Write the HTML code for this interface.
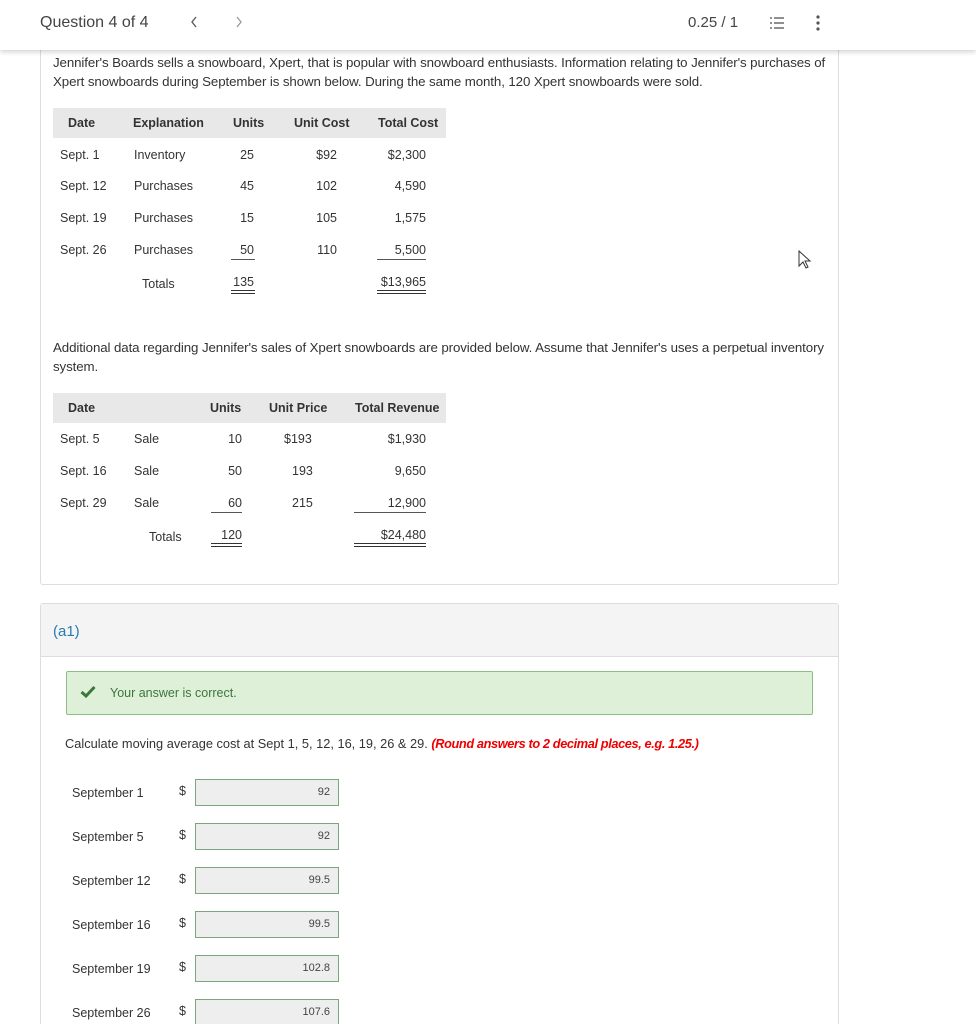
<!DOCTYPE html>
<html><head><meta charset="utf-8"><style>
*{margin:0;padding:0;box-sizing:border-box}
html,body{width:976px;height:1024px;overflow:hidden}
body{background:#fff;font-family:"Liberation Sans",sans-serif;color:#333;position:relative;font-size:12.5px}
.a{position:absolute;line-height:16px;white-space:nowrap}
.r{text-align:right}
.hdr{position:absolute;left:0;top:0;width:976px;height:50px;background:#fff;box-shadow:0 2px 5px rgba(0,0,0,.18);z-index:5}
.card{position:absolute;left:40px;width:799px;border:1px solid #ddd;border-radius:3px;background:#fff}
.th{position:absolute;left:53px;width:393px;height:30px;background:#e8e8e8}
.b{font-weight:bold}
.ul{position:absolute;height:1px;background:#555}
.dl{position:absolute;height:4px;border-top:1px solid #333;border-bottom:1px solid #333}
.inp{position:absolute;left:195px;width:144px;height:27px;background:#eee;border:1px solid #7aa67a;font-size:11px;text-align:right;padding-right:8px;line-height:25px;color:#444}
.p{font-size:13.3px;letter-spacing:-0.1px}
</style></head><body>
<div class="hdr">
<div class="a" style="left:40px;top:13px;font-size:16px;line-height:20px;color:#444">Question 4 of 4</div>
<svg class="a" style="left:190px;top:16px" width="8" height="12"><path d="M6 1 L2 6 L6 11" fill="none" stroke="#555" stroke-width="1.3"/></svg>
<svg class="a" style="left:235px;top:16px" width="8" height="12"><path d="M2 1 L6 6 L2 11" fill="none" stroke="#999" stroke-width="1.3"/></svg>
<div class="a" style="left:688px;top:13px;font-size:15px;line-height:20px;color:#444">0.25 / 1</div>
<svg class="a" style="left:769px;top:15px" width="16" height="16" viewBox="0 0 16 16"><g stroke="#555" stroke-width="1.3"><line x1="5" y1="3" x2="15" y2="3"/><line x1="5" y1="8" x2="15" y2="8"/><line x1="5" y1="13" x2="15" y2="13"/><line x1="2" y1="2" x2="2" y2="4"/><line x1="2" y1="7" x2="2" y2="9"/><line x1="2" y1="12" x2="2" y2="14"/></g></svg>
<svg class="a" style="left:815px;top:14px" width="6" height="18"><circle cx="3" cy="3" r="1.6" fill="#555"/><circle cx="3" cy="9" r="1.6" fill="#555"/><circle cx="3" cy="15" r="1.6" fill="#555"/></svg>
</div>
<div class="card" style="top:20px;height:565px"></div>
<div class="a p" style="left:53px;top:53px;line-height:19px">Jennifer's Boards sells a snowboard, Xpert, that is popular with snowboard enthusiasts. Information relating to Jennifer's purchases of<br>Xpert snowboards during September is shown below. During the same month, 120 Xpert snowboards were sold.</div>
<div class="th" style="top:108px"></div>
<div class="a b" style="left:68px;top:115px">Date</div>
<div class="a b" style="left:133px;top:115px">Explanation</div>
<div class="a b" style="left:233px;top:115px">Units</div>
<div class="a b" style="left:294px;top:115px">Unit Cost</div>
<div class="a b" style="left:378px;top:115px">Total Cost</div>
<div class="a" style="left:60px;top:147px">Sept. 1</div><div class="a" style="left:134px;top:147px">Inventory</div><div class="a r" style="right:722px;top:147px">25</div><div class="a r" style="right:639px;top:147px">$92</div><div class="a r" style="right:550px;top:147px">$2,300</div>
<div class="a" style="left:60px;top:178px">Sept. 12</div><div class="a" style="left:134px;top:178px">Purchases</div><div class="a r" style="right:722px;top:178px">45</div><div class="a r" style="right:639px;top:178px">102</div><div class="a r" style="right:550px;top:178px">4,590</div>
<div class="a" style="left:60px;top:210px">Sept. 19</div><div class="a" style="left:134px;top:210px">Purchases</div><div class="a r" style="right:722px;top:210px">15</div><div class="a r" style="right:639px;top:210px">105</div><div class="a r" style="right:550px;top:210px">1,575</div>
<div class="a" style="left:60px;top:242px">Sept. 26</div><div class="a" style="left:134px;top:242px">Purchases</div><div class="a r" style="right:722px;top:242px">50</div><div class="a r" style="right:639px;top:242px">110</div><div class="a r" style="right:550px;top:242px">5,500</div>
<div class="ul" style="left:231px;width:24px;top:259px"></div><div class="ul" style="left:377px;width:49px;top:259px"></div>
<div class="a" style="left:142px;top:276px">Totals</div><div class="a r" style="right:722px;top:274px">135</div><div class="a r" style="right:550px;top:274px">$13,965</div>
<div class="dl" style="left:231px;width:24px;top:290px"></div><div class="dl" style="left:377px;width:49px;top:290px"></div>
<svg class="a" style="left:797px;top:250px" width="16" height="20" viewBox="0 0 16 20"><path d="M2 1 L2 16 L6 12 L9 18 L11 17 L8 11 L13 11 Z" fill="#fff" stroke="#333" stroke-width="1"/></svg>
<div class="a p" style="left:53px;top:338px;line-height:19px">Additional data regarding Jennifer's sales of Xpert snowboards are provided below. Assume that Jennifer's uses a perpetual inventory<br>system.</div>
<div class="th" style="top:393px"></div>
<div class="a b" style="left:68px;top:400px">Date</div>
<div class="a b" style="left:210px;top:400px">Units</div>
<div class="a b" style="left:269px;top:400px">Unit Price</div>
<div class="a b" style="left:355px;top:400px">Total Revenue</div>
<div class="a" style="left:60px;top:431px">Sept. 5</div><div class="a" style="left:134px;top:431px">Sale</div><div class="a r" style="right:734px;top:431px">10</div><div class="a" style="left:284px;top:431px">$193</div><div class="a r" style="right:550px;top:431px">$1,930</div>
<div class="a" style="left:60px;top:463px">Sept. 16</div><div class="a" style="left:134px;top:463px">Sale</div><div class="a r" style="right:734px;top:463px">50</div><div class="a" style="left:292px;top:463px">193</div><div class="a r" style="right:550px;top:463px">9,650</div>
<div class="a" style="left:60px;top:495px">Sept. 29</div><div class="a" style="left:134px;top:495px">Sale</div><div class="a r" style="right:734px;top:495px">60</div><div class="a" style="left:292px;top:495px">215</div><div class="a r" style="right:550px;top:495px">12,900</div>
<div class="ul" style="left:211px;width:31px;top:512px"></div><div class="ul" style="left:354px;width:72px;top:512px"></div>
<div class="a" style="left:149px;top:529px">Totals</div><div class="a r" style="right:734px;top:527px">120</div><div class="a r" style="right:550px;top:527px">$24,480</div>
<div class="dl" style="left:211px;width:31px;top:543px"></div><div class="dl" style="left:354px;width:72px;top:543px"></div>

<div class="card" style="top:603px;height:460px"></div>
<div style="position:absolute;left:41px;top:604px;width:797px;height:53px;background:#f4f4f4;border-bottom:1px solid #ddd"></div>
<div class="a" style="left:53px;top:622px;font-size:15px;line-height:20px;color:#2a7ab0">(a1)</div>
<div style="position:absolute;left:66px;top:671px;width:747px;height:44px;background:#dff0d8;border:1px solid #8bbd84;border-radius:2px"></div>
<svg class="a" style="left:80px;top:685px" width="16" height="13" viewBox="0 0 16 13"><path d="M1.5 7 L6 11 L14.5 2" fill="none" stroke="#3c763d" stroke-width="3"/></svg>
<div class="a" style="left:110px;top:685px;color:#3c763d">Your answer is correct.</div>
<div class="a" style="left:65px;top:736px;font-size:12.8px">Calculate moving average cost at Sept 1, 5, 12, 16, 19, 26 &amp; 29. <b style="color:#e00;font-style:italic;letter-spacing:-0.4px">(Round answers to 2 decimal places, e.g. 1.25.)</b></div>
<div class="a" style="left:72px;top:785px">September 1</div><div class="a" style="left:179px;top:783px">$</div><div class="inp" style="top:779px">92</div>
<div class="a" style="left:72px;top:829px">September 5</div><div class="a" style="left:179px;top:827px">$</div><div class="inp" style="top:823px">92</div>
<div class="a" style="left:72px;top:873px">September 12</div><div class="a" style="left:179px;top:871px">$</div><div class="inp" style="top:867px">99.5</div>
<div class="a" style="left:72px;top:917px">September 16</div><div class="a" style="left:179px;top:915px">$</div><div class="inp" style="top:911px">99.5</div>
<div class="a" style="left:72px;top:961px">September 19</div><div class="a" style="left:179px;top:959px">$</div><div class="inp" style="top:955px">102.8</div>
<div class="a" style="left:72px;top:1005px">September 26</div><div class="a" style="left:179px;top:1003px">$</div><div class="inp" style="top:999px">107.6</div>
</body></html>
